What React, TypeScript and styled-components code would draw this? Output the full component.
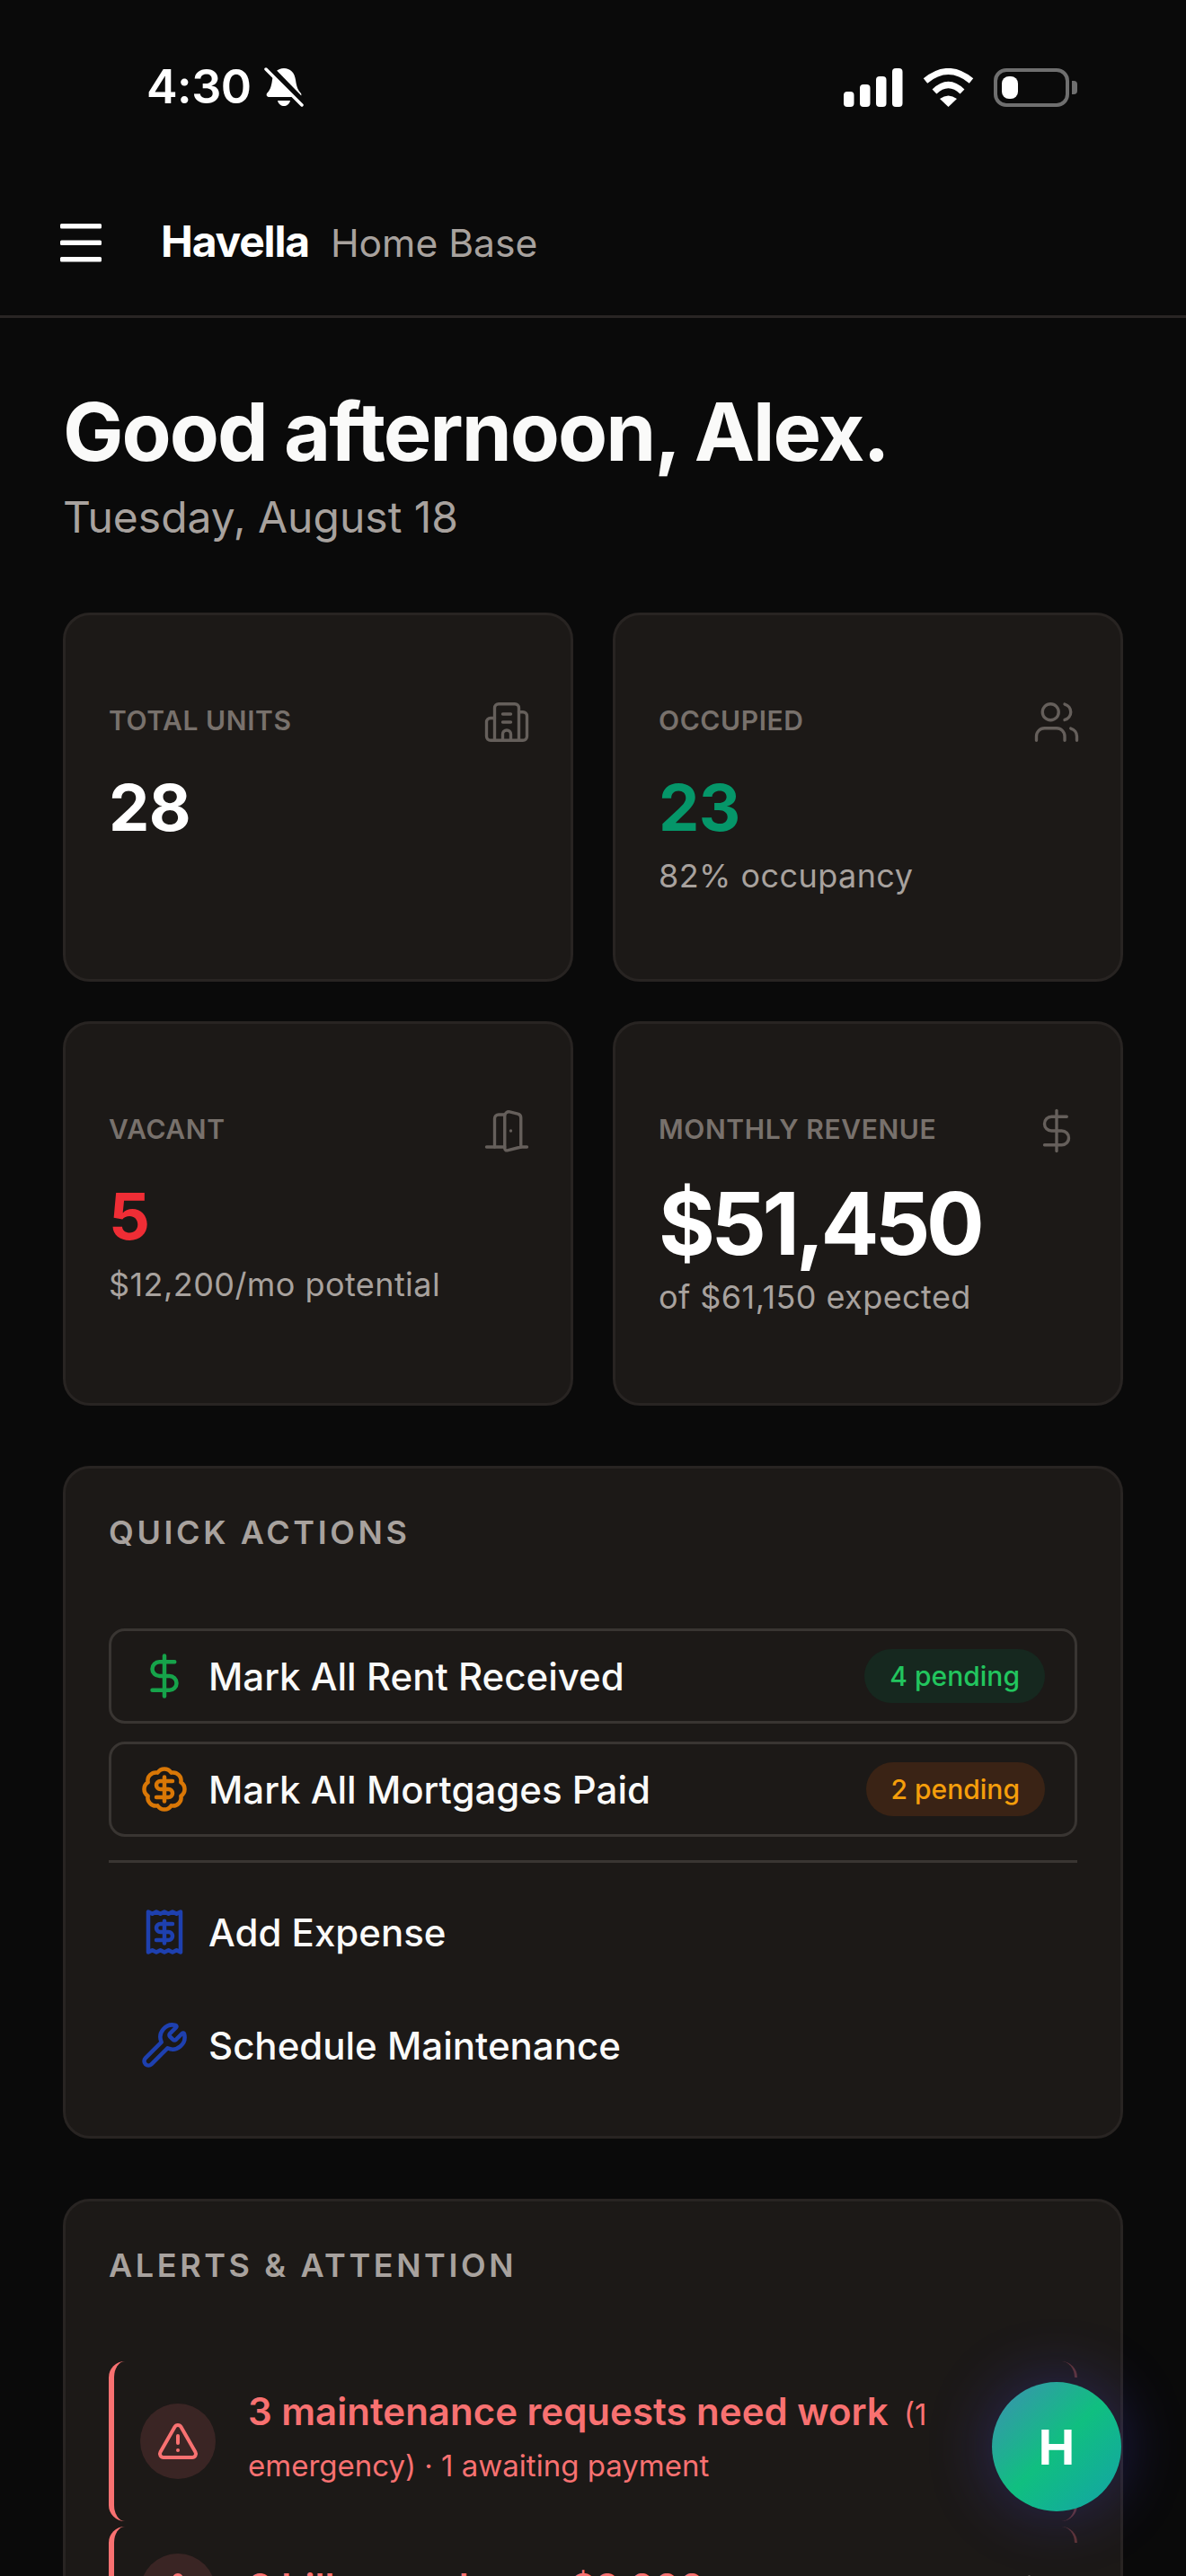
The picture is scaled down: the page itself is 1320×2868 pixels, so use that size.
import styled, { createGlobalStyle } from "styled-components";
import {
  BadgeDollarSign,
  Building2,
  ChevronRight,
  DollarSign,
  DoorOpen,
  Receipt,
  TriangleAlert,
  Users,
  Wrench,
} from "lucide-react";
import type { ReactNode } from "react";

const GlobalStyle = createGlobalStyle`
  html, body {
    margin: 0;
    padding: 0;
    background: #0a0a0a;
    font-family: Inter, "Liberation Sans", sans-serif;
  }
  * {
    box-sizing: border-box;
  }
`;

const Page = styled.div`
  position: relative;
  width: 1320px;
  height: 2868px;
  overflow: hidden;
  background: #0a0a0a;
  color: #fafaf9;
`;

const StatusBar = styled.div`
  height: 189px;
  display: flex;
  justify-content: space-between;
  align-items: flex-start;
  padding: 75px 120px 0 163px;
`;

const StatusLeft = styled.div`
  display: flex;
  align-items: center;
  gap: 14px;
  height: 44px;
`;

const Time = styled.span`
  font-size: 52px;
  font-weight: 600;
  letter-spacing: -0.01em;
  line-height: 44px;
  color: #fff;
`;

const StatusRight = styled.div`
  display: flex;
  align-items: center;
  gap: 22px;
  height: 44px;
`;

const Battery = styled.div`
  position: relative;
  width: 84px;
  height: 43px;
  border: 4px solid #6f6f6f;
  border-radius: 14px;
  padding: 5px;
  margin-right: 10px;

  &::after {
    content: "";
    position: absolute;
    right: -13px;
    top: 10px;
    width: 6px;
    height: 15px;
    border-radius: 0 4px 4px 0;
    background: #6f6f6f;
  }
`;

const BatteryFill = styled.div`
  width: 18px;
  height: 100%;
  border-radius: 8px;
  background: #fff;
`;

const Header = styled.header`
  height: 165px;
  display: flex;
  align-items: center;
  gap: 53px;
  padding: 0 54px;
  border-bottom: 3px solid #292524;
`;

const Brand = styled.div`
  display: flex;
  align-items: baseline;
  gap: 24px;
  padding-bottom: 3px;
`;

const BrandName = styled.span`
  font-size: 48px;
  font-weight: 700;
  letter-spacing: -0.025em;
  color: #fff;
`;

const BrandSub = styled.span`
  font-size: 42.6px;
  font-weight: 400;
  color: #a8a29e;
`;

const Main = styled.main`
  padding: 77px 70px 0;
`;

const Greeting = styled.h1`
  margin: 0;
  font-size: 90px;
  line-height: 100px;
  font-weight: 700;
  letter-spacing: -0.022em;
  color: #fafaf9;
`;

const DateLine = styled.p`
  margin: 9px 0 70px;
  font-size: 48px;
  line-height: 72px;
  color: #a8a29e;
`;

const StatsGrid = styled.div`
  display: grid;
  grid-template-columns: 568px 568px;
  grid-template-rows: 411px 428px;
  gap: 44px;
  margin-bottom: 67px;
`;

const Card = styled.section`
  background: #1c1917;
  border: 3px solid #282422;
  border-radius: 30px;
`;

const StatCard = styled(Card)`
  padding: 92px 44px 0 48px;
`;

const StatTop = styled.div`
  display: flex;
  justify-content: space-between;
  align-items: flex-start;
  height: 54px;
  color: #78716c;

  svg {
    opacity: 0.8;
  }
`;

const StatLabel = styled.span`
  font-size: 30px;
  line-height: 50px;
  font-weight: 600;
  letter-spacing: 0.02em;
  color: #78716c;
`;

const StatValue = styled.div<{ $tone?: string; $big?: boolean }>`
  margin-top: ${(p) => (p.$big ? "24px" : "25px")};
  font-size: ${(p) => (p.$big ? "96px" : "72px")};
  line-height: ${(p) => (p.$big ? "104px" : "86px")};
  font-weight: 700;
  letter-spacing: ${(p) => (p.$big ? "-0.045em" : "-0.01em")};
  color: ${(p) => p.$tone || "#fff"};
`;

const StatNote = styled.div<{ $big?: boolean }>`
  margin-top: ${(p) => (p.$big ? "1px" : "4px")};
  font-size: 36px;
  line-height: 58px;
  letter-spacing: 0.012em;
  color: #a8a29e;
`;

const Panel = styled(Card)`
  padding: 48px;
  margin-bottom: 67px;
`;

const PanelTitle = styled.h2`
  margin: 0 0 84px;
  font-size: 36px;
  line-height: 46px;
  font-weight: 600;
  letter-spacing: 0.1em;
  color: #a8a29e;
`;

const ActionList = styled.div`
  display: flex;
  flex-direction: column;
  gap: 20px;
`;

const ActionRow = styled.div<{ $outlined?: boolean }>`
  display: flex;
  align-items: center;
  gap: 22px;
  height: 106px;
  padding: 0 33px 0 32px;
  border: 3px solid ${(p) => (p.$outlined ? "#393532" : "transparent")};
  border-radius: 18px;
`;

const ActionIcon = styled.span<{ $tone: string }>`
  display: flex;
  color: ${(p) => p.$tone};
`;

const ActionText = styled.span`
  flex: 1;
  font-size: 42px;
  font-weight: 500;
  color: #fafaf9;
`;

const PendingBadge = styled.span<{ $tone: string; $bg: string }>`
  height: 60px;
  padding: 0 28px;
  display: flex;
  align-items: center;
  border-radius: 30px;
  font-size: 30px;
  font-weight: 500;
  color: ${(p) => p.$tone};
  background: ${(p) => p.$bg};
`;

const Divider = styled.div`
  height: 3px;
  margin: 6px 0 4px;
  background: #393532;
`;

const AlertList = styled.div`
  display: flex;
  flex-direction: column;
  gap: 6px;
`;

const AlertRow = styled.div`
  position: relative;
  display: flex;
  align-items: center;
  gap: 36px;
  padding: 30px 16px 30px 29px;
  border-left: 6px solid #f87171;
  border-radius: 18px;

  &::before,
  &::after {
    content: "";
    position: absolute;
    right: 0;
    width: 18px;
    height: 18px;
    border-right: 3px solid rgba(248, 113, 113, 0.3);
  }

  &::before {
    top: 0;
    border-top-right-radius: 18px;
  }

  &::after {
    bottom: 0;
    border-bottom-right-radius: 18px;
  }
`;

const AlertBubble = styled.span`
  flex: none;
  width: 84px;
  height: 84px;
  display: flex;
  align-items: center;
  justify-content: center;
  border-radius: 50%;
  background: #3a2524;
  color: #f87171;
`;

const AlertText = styled.p`
  flex: 1;
  margin: -3px 0 3px;
  font-size: 33px;
  line-height: 57px;
  font-weight: 400;
  color: #f87171;
`;

const AlertStrong = styled.strong`
  margin-right: 8px;
  font-size: 42px;
  font-weight: 600;
`;

const AlertChevron = styled.span`
  flex: none;
  display: flex;
  color: #78716c;
`;

const Fab = styled.button`
  position: absolute;
  right: 72px;
  bottom: 72px;
  width: 144px;
  height: 144px;
  padding: 0;
  border: 0;
  border-radius: 50%;
  font-family: inherit;
  font-size: 54px;
  font-weight: 700;
  color: #fff;
  background: linear-gradient(135deg, #3d8fb3 0%, #10bf80 50%, #14a2a8 100%);
  box-shadow: 0 0 72px rgba(79, 70, 229, 0.32);
`;

const MenuIcon = () => (
  <svg width="72" height="72" viewBox="0 0 72 72" fill="#fff">
    <rect x="13" y="15" width="46" height="5.5" rx="1.5" />
    <rect x="13" y="33.5" width="46" height="5.5" rx="1.5" />
    <rect x="13" y="52" width="46" height="5.5" rx="1.5" />
  </svg>
);

const BellIcon = () => (
  <svg width="44" height="44" viewBox="0 0 44 44">
    <path
      fill="#fff"
      d="M22 1C29 1 34 6 35 14C36 22 38 26 41 29C42 31 41 33 38 33L6 33C3 33 2 31 3 29C6 26 8 22 9 14C10 6 15 1 22 1Z"
    />
    <path fill="#fff" d="M15 37H29C28 41 25 43 22 43C19 43 16 41 15 37Z" />
    <path d="M6 1L44 40" stroke="#0a0a0a" strokeWidth="8" />
    <path d="M2 2L42 42" stroke="#fff" strokeWidth="3.5" strokeLinecap="round" />
  </svg>
);

const SignalIcon = () => (
  <svg width="66" height="43" viewBox="0 0 66 43" fill="#fff">
    <rect x="0" y="26" width="11.5" height="17" rx="4" />
    <rect x="18" y="18" width="11.5" height="25" rx="4" />
    <rect x="36" y="9" width="11.5" height="34" rx="4" />
    <rect x="54" y="0" width="11.5" height="43" rx="4" />
  </svg>
);

const WifiIcon = () => (
  <svg width="57" height="43" viewBox="0 0 57 43" fill="none">
    <path d="M3 14Q28.5 -7 54 14" stroke="#fff" strokeWidth="7" />
    <path d="M13 26Q28.5 11 44 26" stroke="#fff" strokeWidth="7" />
    <path d="M19 34Q28.5 27 38 34L28.5 43Z" fill="#fff" />
  </svg>
);

interface StatProps {
  label: string;
  icon: ReactNode;
  value: string;
  note?: string;
  tone?: string;
  big?: boolean;
}

const Stat = ({ label, icon, value, note, tone, big }: StatProps) => (
  <StatCard>
    <StatTop>
      <StatLabel>{label}</StatLabel>
      {icon}
    </StatTop>
    <StatValue $tone={tone} $big={big}>
      {value}
    </StatValue>
    {note && <StatNote $big={big}>{note}</StatNote>}
  </StatCard>
);

const statIcon = { size: 54, strokeWidth: 1.5 };
const actionIcon = { size: 54, strokeWidth: 2 };

const App = () => (
  <Page>
    <GlobalStyle />
    <StatusBar>
      <StatusLeft>
        <Time>4:30</Time>
        <BellIcon />
      </StatusLeft>
      <StatusRight>
        <SignalIcon />
        <WifiIcon />
        <Battery>
          <BatteryFill />
        </Battery>
      </StatusRight>
    </StatusBar>

    <Header>
      <MenuIcon />
      <Brand>
        <BrandName>Havella</BrandName>
        <BrandSub>Home Base</BrandSub>
      </Brand>
    </Header>

    <Main>
      <Greeting>Good afternoon, Alex.</Greeting>
      <DateLine>Tuesday, August 18</DateLine>

      <StatsGrid>
        <Stat label="TOTAL UNITS" icon={<Building2 {...statIcon} />} value="28" />
        <Stat
          label="OCCUPIED"
          icon={<Users {...statIcon} />}
          value="23"
          note="82% occupancy"
          tone="#059669"
        />
        <Stat
          label="VACANT"
          icon={<DoorOpen {...statIcon} />}
          value="5"
          note="$12,200/mo potential"
          tone="#ef2d35"
        />
        <Stat
          label="MONTHLY REVENUE"
          icon={<DollarSign {...statIcon} />}
          value="$51,450"
          note="of $61,150 expected"
          big
        />
      </StatsGrid>

      <Panel>
        <PanelTitle>QUICK ACTIONS</PanelTitle>
        <ActionList>
          <ActionRow $outlined>
            <ActionIcon $tone="#16a34a">
              <DollarSign {...actionIcon} />
            </ActionIcon>
            <ActionText>Mark All Rent Received</ActionText>
            <PendingBadge $tone="#22c55e" $bg="#16281f">
              4 pending
            </PendingBadge>
          </ActionRow>
          <ActionRow $outlined>
            <ActionIcon $tone="#d97706">
              <BadgeDollarSign {...actionIcon} />
            </ActionIcon>
            <ActionText>Mark All Mortgages Paid</ActionText>
            <PendingBadge $tone="#f59e0b" $bg="#3a2315">
              2 pending
            </PendingBadge>
          </ActionRow>
          <Divider />
          <ActionRow>
            <ActionIcon $tone="#1e40af">
              <Receipt {...actionIcon} />
            </ActionIcon>
            <ActionText>Add Expense</ActionText>
          </ActionRow>
          <ActionRow>
            <ActionIcon $tone="#1e40af">
              <Wrench {...actionIcon} />
            </ActionIcon>
            <ActionText>Schedule Maintenance</ActionText>
          </ActionRow>
        </ActionList>
      </Panel>

      <Panel>
        <PanelTitle>ALERTS &amp; ATTENTION</PanelTitle>
        <AlertList>
          <AlertRow>
            <AlertBubble>
              <TriangleAlert size={48} strokeWidth={2} />
            </AlertBubble>
            <AlertText>
              <AlertStrong>3 maintenance requests need work</AlertStrong> (1 emergency) · 1 awaiting
              payment
            </AlertText>
            <AlertChevron>
              <ChevronRight size={60} strokeWidth={2} />
            </AlertChevron>
          </AlertRow>
          <AlertRow>
            <AlertBubble>
              <TriangleAlert size={48} strokeWidth={2} />
            </AlertBubble>
            <AlertText>
              <AlertStrong>3 bills overdue — $9,000</AlertStrong>
            </AlertText>
            <AlertChevron>
              <ChevronRight size={60} strokeWidth={2} />
            </AlertChevron>
          </AlertRow>
        </AlertList>
      </Panel>
    </Main>

    <Fab>H</Fab>
  </Page>
);

export default App;
